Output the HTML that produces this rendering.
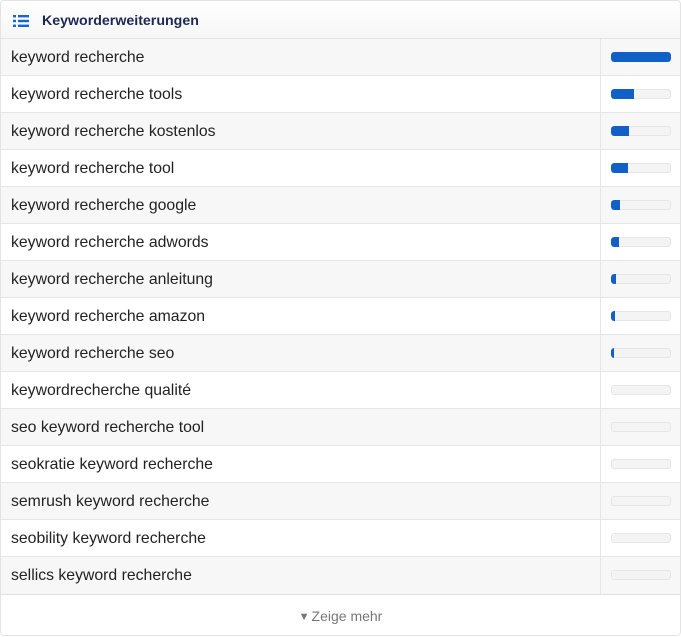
<!DOCTYPE html>
<html><head><meta charset="utf-8"><style>
*{box-sizing:border-box;margin:0;padding:0}
body{width:681px;height:637px;background:#fff;font-family:"Liberation Sans",Arial,sans-serif;overflow:hidden}
.card{position:absolute;left:0;top:0;width:681px;height:636px;border:1px solid #e3e3e3;border-radius:4px;overflow:hidden;background:#fff}
.hd{height:38px;background:linear-gradient(#fff,#f6f6f6);border-bottom:1px solid #e3e3e3;display:flex;align-items:center;padding-left:12px;padding-top:2px}
.hd span{font-weight:bold;font-size:14.2px;color:#1b2a55;margin-left:13px}
.row{height:37px;border-bottom:1px solid #e6e6e6;display:flex;position:relative}
.row:nth-child(odd){background:#f7f7f7}
.row:nth-child(even){background:#fff}
.t{width:600px;border-right:1px solid #e6e6e6;font-size:15.8px;color:#222;padding-left:10px;line-height:38px}
.b{position:absolute;left:610px;top:13px;width:60px;height:10px;border-radius:3px;background:#f4f4f4;box-shadow:inset 0 0 0 1px #e6e6e6;overflow:hidden}
.b i{display:block;height:10px;background:#1060c8;border-radius:3px 0 0 3px}
.ft{height:42px;text-align:center;line-height:42px;font-size:14px;color:#777;border-top:1px solid #e0e0e0}
</style></head><body><div class="card">
<div class="hd"><svg width="16" height="12" viewBox="0 0 16 12"><g fill="#1565d0"><rect x="0" y="0" width="3" height="2.4"/><rect x="0" y="4.8" width="3" height="2.4"/><rect x="0" y="9.6" width="3" height="2.4"/><rect x="5" y="0" width="11" height="2.4"/><rect x="5" y="4.8" width="11" height="2.4"/><rect x="5" y="9.6" width="11" height="2.4"/></g></svg><span>Keyworderweiterungen</span></div>
<div>
<div class="row"><div class="t">keyword recherche</div><div class="b"><i style="width:60px;border-radius:3px"></i></div></div>
<div class="row"><div class="t">keyword recherche tools</div><div class="b"><i style="width:23px"></i></div></div>
<div class="row"><div class="t">keyword recherche kostenlos</div><div class="b"><i style="width:18px"></i></div></div>
<div class="row"><div class="t">keyword recherche tool</div><div class="b"><i style="width:17px"></i></div></div>
<div class="row"><div class="t">keyword recherche google</div><div class="b"><i style="width:9px"></i></div></div>
<div class="row"><div class="t">keyword recherche adwords</div><div class="b"><i style="width:8px"></i></div></div>
<div class="row"><div class="t">keyword recherche anleitung</div><div class="b"><i style="width:5px"></i></div></div>
<div class="row"><div class="t">keyword recherche amazon</div><div class="b"><i style="width:4px"></i></div></div>
<div class="row"><div class="t">keyword recherche seo</div><div class="b"><i style="width:3px"></i></div></div>
<div class="row"><div class="t">keywordrecherche qualité</div><div class="b"></div></div>
<div class="row"><div class="t">seo keyword recherche tool</div><div class="b"></div></div>
<div class="row"><div class="t">seokratie keyword recherche</div><div class="b"></div></div>
<div class="row"><div class="t">semrush keyword recherche</div><div class="b"></div></div>
<div class="row"><div class="t">seobility keyword recherche</div><div class="b"></div></div>
<div class="row" style="border-bottom:none"><div class="t">sellics keyword recherche</div><div class="b"></div></div>
</div>
<div class="ft"><span style="font-size:11px;position:relative;top:-1px;margin-right:2px">▼</span>Zeige mehr</div>
</div></body></html>
